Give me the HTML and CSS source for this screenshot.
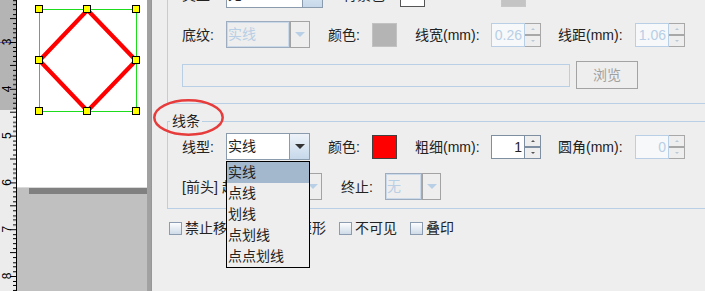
FILE: index.html
```html
<!DOCTYPE html>
<html lang="zh-CN">
<head>
    <meta charset="UTF-8">
    <title>线条属性</title>
    <link rel="stylesheet" href="styles.css">
</head>
<body>
    <!-- 画布 + 标尺 -->
    <div class="workspace">
        <div class="ruler">
            <svg width="16" height="291">
                <defs>
                    <pattern id="ticks" x="0" y="42" width="16" height="46.8" patternUnits="userSpaceOnUse">
                        <path d="M10 0.5H16M13 5.5H16M13 9.5H16M13 14.5H16M13 19.5H16M10 23.5H16M13 28.5H16M13 33.5H16M13 37.5H16M13 42.5H16" stroke="#000" stroke-width="1"/>
                    </pattern>
                </defs>
                <rect width="16" height="291" fill="#ececec"/>
                <rect width="16" height="110" fill="#b4b4b4"/>
                <rect width="16" height="291" fill="url(#ticks)"/>
                <line x1="0" y1="42.5" x2="10" y2="42.5" stroke="#5b5bb0"/>
                <g font-size="12" font-family="Liberation Sans, sans-serif" text-anchor="middle" fill="#000">
                    <text transform="translate(11 42) rotate(-90)">3</text>
                    <text transform="translate(11 88.8) rotate(-90)">4</text>
                    <text transform="translate(11 135.6) rotate(-90)">5</text>
                    <text transform="translate(11 182.4) rotate(-90)">6</text>
                    <text transform="translate(11 229.2) rotate(-90)">7</text>
                    <text transform="translate(11 276) rotate(-90)">8</text>
                </g>
            </svg>
        </div>
        <div class="canvas">
            <div class="page">
                <svg width="130" height="187" viewBox="17 0 130 187">
                    <rect x="39.5" y="9.5" width="97" height="102" fill="none" stroke="#1ddc1d"/>
                    <path d="M87.5 10 L136 60.5 L87.5 111 L39.5 60.5 Z" fill="none" stroke="#ff0000" stroke-width="4.2"/>
                    <g fill="#ffff00" stroke="#000" stroke-width="1">
                        <rect x="35.5" y="5.5" width="7" height="7"/>
                        <rect x="83.5" y="5.5" width="7" height="7"/>
                        <rect x="132.5" y="5.5" width="7" height="7"/>
                        <rect x="35.5" y="56.5" width="7" height="7"/>
                        <rect x="132.5" y="56.5" width="7" height="7"/>
                        <rect x="35.5" y="107.5" width="7" height="7"/>
                        <rect x="83.5" y="107.5" width="7" height="7"/>
                        <rect x="132.5" y="107.5" width="7" height="7"/>
                    </g>
                </svg>
            </div>
            <div class="desk"><div class="desk-shadow"></div></div>
        </div>
    </div>
    <div class="splitter"></div>

    <!-- 属性面板 -->
    <div class="panel">
        <div class="group top-group">
            <div class="row">
                <span class="lbl">类型:</span>
                <div class="combo wide">
                    <span class="combo-text">无</span>
                    <span class="combo-btn"><i class="arrow"></i></span>
                </div>
                <span class="lbl bg-lbl">背景色:</span>
                <span class="swatch white"></span>
                <span class="swatch pale"></span>
            </div>
            <div class="row">
                <span class="lbl">底纹:</span>
                <div class="combo off">
                    <span class="combo-text">实线</span>
                    <span class="combo-btn"><i class="arrow"></i></span>
                </div>
                <span class="lbl next">颜色:</span>
                <span class="swatch grey"></span>
                <span class="lbl mm next">线宽(mm):</span>
                <div class="spinner off">
                    <span class="spin-text">0.26</span>
                    <span class="spin-btns"><b class="up"></b><b class="down"></b></span>
                </div>
                <span class="lbl mm next2">线距(mm):</span>
                <div class="spinner off">
                    <span class="spin-text">1.06</span>
                    <span class="spin-btns"><b class="up"></b><b class="down"></b></span>
                </div>
            </div>
            <div class="row tall">
                <div class="path-field"></div>
                <button class="browse" disabled>浏览</button>
            </div>
        </div>

        <fieldset class="group line-group">
            <legend>线条</legend>
            <div class="rows">
                <div class="row">
                    <span class="lbl">线型:</span>
                    <div class="combo">
                        <span class="combo-text">实线</span>
                        <span class="combo-btn"><i class="arrow"></i></span>
                        <ul class="popup">
                            <li class="sel">实线</li>
                            <li>点线</li>
                            <li>划线</li>
                            <li>点划线</li>
                            <li>点点划线</li>
                        </ul>
                    </div>
                    <span class="lbl next">颜色:</span>
                    <span class="swatch red"></span>
                    <span class="lbl mm next">粗细(mm):</span>
                    <div class="spinner">
                        <span class="spin-text">1</span>
                        <span class="spin-btns"><b class="up"></b><b class="down"></b></span>
                    </div>
                    <span class="lbl mm next2">圆角(mm):</span>
                    <div class="spinner off">
                        <span class="spin-text">0</span>
                        <span class="spin-btns"><b class="up"></b><b class="down"></b></span>
                    </div>
                </div>
                <div class="row">
                    <span class="lbl arrow-lbl">[前头]</span>
                    <span class="lbl">起始:</span>
                    <div class="combo small off">
                        <span class="combo-text">无</span>
                        <span class="combo-btn"><i class="arrow"></i></span>
                    </div>
                    <span class="lbl end-lbl">终止:</span>
                    <div class="combo small off">
                        <span class="combo-text">无</span>
                        <span class="combo-btn"><i class="arrow"></i></span>
                    </div>
                </div>
            </div>
        </fieldset>

        <div class="checks">
            <label class="check"><span class="box"></span>禁止移动</label>
            <label class="check"><span class="box"></span>保持矩形</label>
            <label class="check"><span class="box"></span>不可见</label>
            <label class="check"><span class="box"></span>叠印</label>
        </div>

        <!-- 标注圈 -->
        <svg class="mark" width="80" height="45">
            <ellipse cx="36.5" cy="22.5" rx="34.2" ry="17.2" fill="none" stroke="#e63c3c" stroke-width="2.5"/>
        </svg>
    </div>
</body>
</html>
```

FILE: styles.css
```css
* {
    box-sizing: border-box;
}

body {
    margin: 0;
    display: flex;
    height: 291px;
    overflow: hidden;
    background: #eeeeee;
    font-family: "Liberation Sans", "Noto Sans CJK SC", sans-serif;
    font-size: 14px;
    line-height: 16px;
    color: #222;
}

/* 左侧画布 */
.workspace {
    display: flex;
    flex: none;
}

.ruler {
    width: 17px;
    border-right: 1px solid #000;
}

.ruler svg,
.page svg {
    display: block;
}

.canvas {
    width: 134px;
    display: flex;
    flex-direction: column;
    background: linear-gradient(to right, #e4e4e4, #a0a0a0);
}

.page {
    width: 130px;
    height: 187px;
    background: #fff;
}

.desk {
    width: 130px;
    flex: 1;
    background: #c0c0c0;
    border-top: 1px solid #d9d9d9;
}

.desk-shadow {
    height: 6px;
    margin-left: 12px;
    background: #808080;
}

.splitter {
    flex: none;
    width: 1px;
    background: #7b9bcf;
}

/* 右侧面板 */
.panel {
    flex: 1;
    position: relative;
    overflow: hidden;
    padding-left: 15px;
}

.group {
    width: 560px;
    border: 1px solid #b8cfe5;
}

.top-group {
    margin-top: -24px;
    padding: 4px 0 14px 14px;
    display: flex;
    flex-direction: column;
    gap: 13px;
}

.line-group {
    margin: 9px 0 0;
    padding: 4px 0 8px 2px;
    min-width: 0;
}

.line-group legend {
    padding: 0 2px;
    line-height: 16px;
}

.rows {
    margin-left: 12px;
    display: flex;
    flex-direction: column;
    gap: 13px;
}

.row {
    display: flex;
    align-items: center;
    height: 27px;
}

.row.tall {
    height: 28px;
}

.lbl {
    flex: none;
    width: 44px;
    white-space: nowrap;
}

.lbl.next {
    margin-left: 18px;
}

.lbl.mm {
    width: 76px;
}

.lbl.next2 {
    margin-left: 17px;
    width: 77px;
}

.bg-lbl {
    margin-left: 20px;
    width: 57px;
}

.arrow-lbl {
    width: 40px;
}

.lbl.end-lbl {
    margin-left: 19px;
}

/* 下拉框 */
.combo {
    flex: none;
    position: relative;
    display: flex;
    width: 84px;
    height: 27px;
}

.combo.wide {
    width: 97px;
}

.combo.small {
    width: 56px;
}

.combo-text {
    flex: 1;
    border: 1px solid #8a9bae;
    background: #fff;
    padding-left: 1px;
    line-height: 25px;
    white-space: nowrap;
    overflow: hidden;
}

.combo-btn {
    width: 20px;
    border: 1px solid #8a9bae;
    border-left: none;
    background: linear-gradient(#eef3f9, #c6d8ea);
    display: flex;
    align-items: center;
    justify-content: center;
}

.combo.small .combo-btn {
    width: 19px;
}

.arrow {
    width: 0;
    height: 0;
    border-left: 5px solid transparent;
    border-right: 5px solid transparent;
    border-top: 5px solid #333;
}

.combo.off .combo-text {
    background: #eeeeee;
    color: #b8cfe5;
    border-color: #9dadbf;
    box-shadow: inset 1px 1px 0 #cbdaea, inset -1px -1px 0 #cbdaea;
}

.combo.off .combo-btn {
    background: #eeeeee;
    border: 1px solid #a3a3a3;
}

.combo.off .arrow {
    border-top-color: #b8cfe5;
}

.popup {
    position: absolute;
    top: 28px;
    left: 0;
    width: 84px;
    margin: 0;
    padding: 0;
    list-style: none;
    border: 1px solid #000;
    background: #eeeeee;
    z-index: 2;
}

.popup li {
    height: 21px;
    line-height: 21px;
    padding-left: 1px;
    color: #222;
}

.popup .sel {
    background: #a3b8cc;
}

/* 颜色块 */
.swatch {
    flex: none;
    width: 25px;
    height: 24px;
    border: 1px solid #404040;
}

.swatch.red {
    background: #ff0000;
}

.swatch.grey {
    background: #b4b4b4;
    border-color: #c2c2c2;
}

.swatch.white {
    background: #fff;
    border-color: #555;
}

.swatch.pale {
    margin-left: 76px;
    background: #c4c4c4;
    border-color: #c8c8c8;
}

/* 数字框 */
.spinner {
    flex: none;
    display: flex;
    width: 50px;
    height: 24px;
}

.spin-text {
    flex: 1;
    border: 1px solid #7e8fa1;
    background: #fff;
    text-align: right;
    padding-right: 2px;
    line-height: 22px;
}

.spin-btns {
    width: 16px;
    display: flex;
    flex-direction: column;
    border: 1px solid #7e8fa1;
    border-left: none;
    background: #eeeeee;
}

.spin-btns b {
    flex: 1;
    display: flex;
    align-items: center;
    justify-content: center;
}

.spin-btns b + b {
    border-top: 2px solid #7e8fa1;
}

.spin-btns b::after {
    content: "";
    border-left: 2px solid transparent;
    border-right: 2px solid transparent;
}

.spin-btns .up::after {
    border-bottom: 2px solid #555;
}

.spin-btns .down::after {
    border-top: 2px solid #555;
}

.spinner.off .spin-text {
    border-color: #b8cfe5;
    background: #f7f8fa;
    color: #b8cfe5;
}

.spinner.off .spin-btns,
.spinner.off .spin-btns b + b {
    border-color: #a8a8a8;
}

.spinner.off .up::after {
    border-bottom-color: #b8c8d8;
}

.spinner.off .down::after {
    border-top-color: #b8c8d8;
}

/* 浏览 */
.path-field {
    flex: none;
    width: 388px;
    height: 23px;
    border: 1px solid #b8cfe5;
}

.browse {
    flex: none;
    margin-left: 6px;
    width: 62px;
    height: 28px;
    padding: 0;
    border: 1px solid #a3a3a3;
    background: #eeeeee;
    color: #a0a0a0;
    font: inherit;
}

/* 复选框 */
.checks {
    display: flex;
    align-items: center;
    height: 16px;
    margin: 11px 0 0 2px;
}

.check {
    display: flex;
    align-items: center;
    gap: 3px;
    margin-right: 13px;
    white-space: nowrap;
}

.box {
    width: 13px;
    height: 13px;
    border: 1px solid #8c9cb0;
    background: linear-gradient(#fcfdfe, #cfdbe8);
}

.mark {
    position: absolute;
    left: 0;
    top: 95px;
}
```
